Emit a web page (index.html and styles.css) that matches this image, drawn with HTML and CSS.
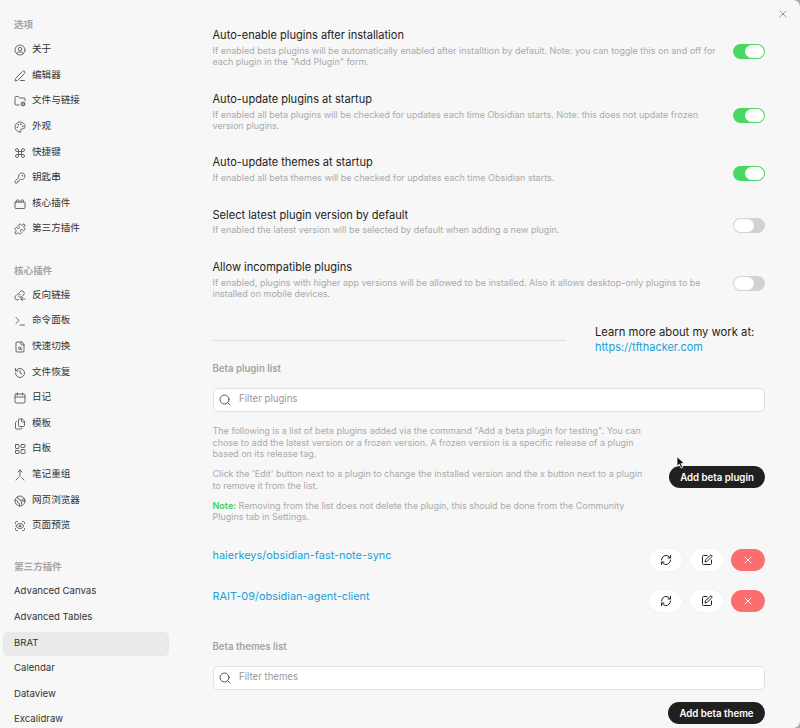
FILE: index.html
```html
<!DOCTYPE html>
<html lang="zh-CN">
<head>
<meta charset="utf-8">
<title>BRAT</title>
<link rel="stylesheet" href="styles.css">
</head>
<body>
<svg class="defs" aria-hidden="true">
  <symbol id="i-search" viewBox="0 0 24 24"><circle cx="11" cy="11" r="9"/><path d="m22 22-4.500-4.500"/></symbol>
  <symbol id="i-x" viewBox="0 0 24 24"><path d="M18 6 6 18M6 6l12 12"/></symbol>
  <symbol id="i-sync" viewBox="0 0 24 24"><path d="M3 12a9 9 0 0 1 9-9 9.750 9.750 0 0 1 6.740 2.740L21 8M21 3v5h-5M21 12a9 9 0 0 1-9 9 9.750 9.750 0 0 1-6.740-2.740L3 16M8 16H3v5"/></symbol>
  <symbol id="i-edit" viewBox="0 0 24 24"><path d="M12 3H5a2 2 0 0 0-2 2v14a2 2 0 0 0 2 2h14a2 2 0 0 0 2-2v-7"/><path d="M18.400 2.600a2.120 2.120 0 0 1 3 3L12 15l-4 1 1-4Z"/></symbol>
</svg>
<div class="modal">
  <nav class="sidebar">
    <section class="group">
      <h2>选项</h2>
      <a class="item"><svg viewBox="0 0 24 24"><circle cx="12" cy="12" r="10"/><circle cx="12" cy="10" r="3.500"/><path d="M6 19.500v-.5a3 3 0 0 1 3-3h6a3 3 0 0 1 3 3v.5"/></svg><span>关于</span></a>
      <a class="item"><svg viewBox="0 0 24 24"><path d="M13 21h8M21.200 6.800a2.800 2.800 0 0 0-4-4L3.800 16.200a2 2 0 0 0-.5.8L2 21.400a.5.5 0 0 0 .6.6l4.400-1.300a2 2 0 0 0 .8-.5z"/></svg><span>编辑器</span></a>
      <a class="item"><svg viewBox="0 0 24 24"><path d="M10.300 20H4a2 2 0 0 1-2-2V5a2 2 0 0 1 2-2h3.900a2 2 0 0 1 1.700.9l.8 1.200a2 2 0 0 0 1.700.9H20a2 2 0 0 1 2 2v3.300"/><circle cx="18" cy="18" r="3"/><path d="M18 14v1M18 21v1M22 18h-1M15 18h-1M21 15l-.9.9M15.900 20.100 15 21M21 21l-.9-.9M15.900 15.900 15 15"/></svg><span>文件与链接</span></a>
      <a class="item"><svg viewBox="0 0 24 24"><path d="M12 22a1 1 0 0 1 0-20 10 9 0 0 1 10 9 5 5 0 0 1-5 5h-2.250a1.750 1.750 0 0 0-1.400 2.800l.3.400a1.750 1.750 0 0 1-1.400 2.800z"/><circle cx="13.500" cy="6.500" r=".6"/><circle cx="17.500" cy="10.500" r=".6"/><circle cx="6.500" cy="12.500" r=".6"/><circle cx="8.500" cy="7.500" r=".6"/></svg><span>外观</span></a>
      <a class="item"><svg viewBox="0 0 24 24"><path d="M15 6v12a3 3 0 1 0 3-3H6a3 3 0 1 0 3 3V6a3 3 0 1 0-3 3h12a3 3 0 1 0-3-3"/></svg><span>快捷键</span></a>
      <a class="item"><svg viewBox="0 0 24 24"><path d="M2.600 17.400A2 2 0 0 0 2 18.800V21a1 1 0 0 0 1 1h3a1 1 0 0 0 1-1v-1a1 1 0 0 1 1-1h1a1 1 0 0 0 1-1v-1a1 1 0 0 1 1-1h.2a2 2 0 0 0 1.400-.6l.8-.8a6.500 6.500 0 1 0-4-4z"/><circle cx="16.500" cy="7.500" r=".6"/></svg><span>钥匙串</span></a>
      <a class="item"><svg viewBox="0 0 24 24"><rect x="2" y="8" width="20" height="13" rx="1"/><path d="M10 8V5c0-.6-.4-1-1-1H6a1 1 0 0 0-1 1v3M19 8V5c0-.6-.4-1-1-1h-3a1 1 0 0 0-1 1v3"/></svg><span>核心插件</span></a>
      <a class="item"><svg viewBox="0 0 24 24"><path d="M15.400 4.400a1 1 0 0 0 1.700-.5 2.500 2.500 0 1 1 3 3 1 1 0 0 0-.5 1.700l1.700 1.700a2.400 2.400 0 0 1 0 3.400l-1.700 1.700a1 1 0 0 1-1.700-.5 2.500 2.500 0 1 0-3 3 1 1 0 0 1 .5 1.700l-1.700 1.700a2.400 2.400 0 0 1-3.400 0l-1.700-1.700a1 1 0 0 0-1.700.5 2.500 2.500 0 1 1-3-3 1 1 0 0 0 .5-1.700l-1.700-1.700a2.400 2.400 0 0 1 0-3.400l1.700-1.700a1 1 0 0 1 1.700.5 2.500 2.500 0 1 0 3-3 1 1 0 0 1-.5-1.700l1.700-1.700a2.400 2.400 0 0 1 3.400 0z"/></svg><span>第三方插件</span></a>
    </section>
    <section class="group">
      <h2>核心插件</h2>
      <a class="item"><svg viewBox="0 0 24 24"><path d="M9 12.500a4.700 4.700 0 0 0 7 .5l3-3a4.800 4.800 0 0 0-6.800-6.800L10.500 5M13 9.500a4.700 4.700 0 0 0-7-.5l-3 3A4.800 4.800 0 0 0 9.500 19M22 18h-8M17 14.500 13.500 18l3.500 3.500"/></svg><span>反向链接</span></a>
      <a class="item"><svg viewBox="0 0 24 24"><path d="m4 17 6-6-6-6M12 20h9"/></svg><span>命令面板</span></a>
      <a class="item"><svg viewBox="0 0 24 24"><path d="M15 2H6a2 2 0 0 0-2 2v16a2 2 0 0 0 2 2h12a2 2 0 0 0 2-2V7zM14 2v4a2 2 0 0 0 2 2h4"/><circle cx="11.500" cy="14.500" r="2.500"/><path d="m13.300 16.300 2.200 2.200"/></svg><span>快速切换</span></a>
      <a class="item"><svg viewBox="0 0 24 24"><path d="M3 12a9 9 0 1 0 9-9 9.750 9.750 0 0 0-6.740 2.740L3 8M3 3v5h5M12 7v5l4 2"/></svg><span>文件恢复</span></a>
      <a class="item"><svg viewBox="0 0 24 24"><path d="M7 2v4M17 2v4M2 10h20"/><rect x="2" y="4" width="20" height="18" rx="2"/></svg><span>日记</span></a>
      <a class="item"><svg viewBox="0 0 24 24"><path d="M16 2h-5a2 2 0 0 0-2 2v11a2 2 0 0 0 2 2h8a2 2 0 0 0 2-2V7zM15 2v4a2 2 0 0 0 2 2h4M5 7a2 2 0 0 0-2 2v11a2 2 0 0 0 2 2h9a2 2 0 0 0 2-2"/></svg><span>模板</span></a>
      <a class="item"><svg viewBox="0 0 24 24"><rect x="3" y="3" width="7" height="8" rx="1"/><rect x="14" y="3" width="8" height="6" rx="1"/><rect x="14" y="13" width="8" height="8" rx="1"/><rect x="3" y="15" width="7" height="6" rx="1"/></svg><span>白板</span></a>
      <a class="item"><svg viewBox="0 0 24 24"><path d="m8 6 4-4 4 4M12 2v10.300a4 4 0 0 1-1.200 2.900L4 22M20 22l-5-5"/></svg><span>笔记重组</span></a>
      <a class="item"><svg viewBox="0 0 24 24"><circle cx="12" cy="12" r="10"/><path d="M21.500 12H17a2 2 0 0 0-2 2v4.500M7 3.300V5a3 3 0 0 0 3 3 2 2 0 0 1 2 2 2 2 0 0 0 4 0c0-1.100.9-2 2-2h3.200M11 22v-4a2 2 0 0 0-2-2 2 2 0 0 1-2-2v-1a2 2 0 0 0-2-2H2"/></svg><span>网页浏览器</span></a>
      <a class="item"><svg viewBox="0 0 24 24"><path d="M3 7V5a2 2 0 0 1 2-2h2M17 3h2a2 2 0 0 1 2 2v2M21 17v2a2 2 0 0 1-2 2h-2M7 21H5a2 2 0 0 1-2-2v-2M4.500 12a8 8 0 0 1 15 0 8 8 0 0 1-15 0z"/><circle cx="12" cy="12" r="1.800"/></svg><span>页面预览</span></a>
    </section>
    <section class="group">
      <h2>第三方插件</h2>
      <a class="item"><span>Advanced Canvas</span></a>
      <a class="item"><span>Advanced Tables</span></a>
      <a class="item active"><span>BRAT</span></a>
      <a class="item"><span>Calendar</span></a>
      <a class="item"><span>Dataview</span></a>
      <a class="item"><span>Excalidraw</span></a>
    </section>
  </nav>
  <main class="content">
    <div class="setting tall">
      <div><h3>Auto-enable plugins after installation</h3>
      <p>If enabled beta plugins will be automatically enabled after installtion by default. Note: you can toggle this on and off for<br>each plugin in the "Add Plugin" form.</p></div>
      <span class="toggle on"></span>
    </div>
    <div class="setting tall second">
      <div><h3>Auto-update plugins at startup</h3>
      <p>If enabled all beta plugins will be checked for updates each time Obsidian starts. Note: this does not update frozen<br>version plugins.</p></div>
      <span class="toggle on"></span>
    </div>
    <div class="setting">
      <div><h3>Auto-update themes at startup</h3>
      <p>If enabled all beta themes will be checked for updates each time Obsidian starts.</p></div>
      <span class="toggle on"></span>
    </div>
    <div class="setting">
      <div><h3>Select latest plugin version by default</h3>
      <p>If enabled the latest version will be selected by default when adding a new plugin.</p></div>
      <span class="toggle"></span>
    </div>
    <div class="setting tall">
      <div><h3>Allow incompatible plugins</h3>
      <p>If enabled, plugins with higher app versions will be allowed to be installed. Also it allows desktop-only plugins to be<br>installed on mobile devices.</p></div>
      <span class="toggle"></span>
    </div>
    <div class="promo">
      <hr>
      <div>Learn more about my work at:<br><a>https://tfthacker.com</a></div>
    </div>
    <h4>Beta plugin list</h4>
    <div class="search"><svg><use href="#i-search"/></svg><span>Filter plugins</span></div>
    <div class="intro">
      <div>
        <p>The following is a list of beta plugins added via the command "Add a beta plugin for testing". You can<br>chose to add the latest version or a frozen version. A frozen version is a specific release of a plugin<br>based on its release tag.</p>
        <p>Click the 'Edit' button next to a plugin to change the installed version and the x button next to a plugin<br>to remove it from the list.</p>
        <p><b>Note:</b> Removing from the list does not delete the plugin, this should be done from the Community<br>Plugins tab in Settings.</p>
      </div>
      <button class="cta">Add beta plugin</button>
    </div>
    <div class="plugin">
      <a>haierkeys/obsidian-fast-note-sync</a>
      <div class="actions"><button><svg><use href="#i-sync"/></svg></button><button><svg><use href="#i-edit"/></svg></button><button class="remove"><svg><use href="#i-x"/></svg></button></div>
    </div>
    <div class="plugin">
      <a>RAIT-09/obsidian-agent-client</a>
      <div class="actions"><button><svg><use href="#i-sync"/></svg></button><button><svg><use href="#i-edit"/></svg></button><button class="remove"><svg><use href="#i-x"/></svg></button></div>
    </div>
    <h4 class="themes">Beta themes list</h4>
    <div class="search"><svg><use href="#i-search"/></svg><span>Filter themes</span></div>
    <div class="footer"><button class="cta">Add beta theme</button></div>
  </main>
  <svg class="close"><use href="#i-x"/></svg>
</div>
<svg class="cursor" viewBox="0 0 9 13"><path d="M1 .8v9.400l2.300-2 1.700 3.900 1.800-.8-1.700-3.700h3z"/></svg>
</body>
</html>
```
FILE: styles.css
```css
* { box-sizing: border-box; }
body {
  margin: 0;
  height: 728px;
  overflow: hidden;
  background: #aaa;
  color: #222;
  font-family: Inter, "Noto Sans CJK SC", sans-serif;
}
h2, h3, h4, p { margin: 0; }
svg { fill: none; stroke: currentColor; stroke-width: 1.75; stroke-linecap: round; stroke-linejoin: round; }
.defs { display: none; }
.modal {
  position: relative;
  display: flex;
  height: 728px;
  overflow: hidden;
  background: #f7f7f7;
  border-radius: 0 7px 7px 0;
}

.sidebar { width: 172px; flex: none; padding: 13.300px 3px 0; }
.group { margin-bottom: 15.200px; }
.group + .group { margin-top: 17.300px; }
.group h2 {
  height: 25px;
  padding-left: 11px;
  color: #a5a5a5;
  font-size: 9.600px;
  line-height: 24px;
  font-weight: 600;
}
.item {
  display: flex;
  align-items: center;
  gap: 6px;
  height: 24px;
  margin-bottom: 1.600px;
  padding-left: 11px;
  border-radius: 5px;
  font-size: 9.600px;
  line-height: 22px;
  white-space: nowrap;
}
.item svg { width: 12px; height: 12px; color: #555; flex: none; }
.item span { height: 24px; }
.active { width: 166px; background: #eaeaea; }

.content { width: 552.500px; margin-left: 40.500px; padding-top: 27px; white-space: nowrap; }
.setting {
  display: flex;
  justify-content: space-between;
  align-items: flex-start;
  height: 52.500px;
}
.setting.tall { height: 64px; }
.setting.second { height: 63px; }
h3 { font-size: 11.050px; line-height: 16px; font-weight: 400; margin-bottom: 1.500px; }
p { color: #aaa; font-size: 8.990px; line-height: 11.500px; }
.toggle {
  width: 32px;
  height: 15px;
  margin-top: 11.500px;
  padding: 1px;
  border-radius: 8px;
  background: #d2d2d2;
  flex: none;
}
.tall .toggle { margin-top: 17px; }
.toggle::after {
  content: "";
  display: block;
  width: 20px;
  height: 13px;
  border-radius: 7px;
  background: #fff;
}
.toggle.on { background: #4bd763; }
.toggle.on::after { margin-left: 11px; width: 19px; }

.promo { display: flex; justify-content: space-between; align-items: center; height: 30px; margin-top: 2px; font-size: 11.250px; line-height: 15px; }
.promo div { width: 170px; }
.promo a { font-size: 11px; }
.promo hr { width: 353px; margin: 0; border: 0; border-top: 1px solid #ddd; }
a { color: #1b9fd8; }
.item { color: #333; }
h4 { height: 14px; margin-top: 7px; color: #a3a3a3; font-size: 9.650px; line-height: 14px; font-weight: 600; }
.search {
  display: flex;
  align-items: center;
  gap: 8px;
  height: 24px;
  margin-top: 12px;
  padding-left: 5.500px;
  border: 1px solid #e0e0e0;
  border-radius: 5px;
  background: #fff;
  color: #999;
  font-size: 9.650px;
  line-height: 20px;
}
.search svg { width: 12px; height: 12px; color: #555; stroke-width: 2; }
.search span { height: 22px; }
.intro { display: flex; justify-content: space-between; margin-top: 13px; height: 121.500px; }
.intro p { margin-bottom: 8.700px; }
b { color: #43d15b; font-weight: 600; }
button { border: 0; font: inherit; padding: 0; }
.cta {
  height: 22px;
  width: 96px;
  margin-top: 41px;
  border-radius: 11px;
  background: #202020;
  color: #fff;
  font-size: 9.700px;
  line-height: 21px;
  font-weight: 600;
}
.plugin { display: flex; justify-content: space-between; height: 41px; font-size: 10.950px; line-height: 16px; }
.actions { display: flex; gap: 8px; margin-top: 2px; }
.actions button {
  display: flex;
  align-items: center;
  justify-content: center;
  width: 33px;
  height: 22px;
  border-radius: 11px;
  background: #fff;
  box-shadow: 0 0 1px #ddd;
}
.actions svg { width: 12px; height: 12px; color: #222; stroke-width: 2; }
.actions .remove { width: 34px; background: #fb6e6e; box-shadow: none; }
.actions .remove svg { color: #fff; }
.themes { margin-top: 11.500px; }
.footer { display: flex; justify-content: flex-end; }
.footer .cta { width: 97px; margin-top: 12px; }
.close { position: absolute; right: 11px; top: 8px; width: 12px; height: 12px; color: #888; }
.cursor { position: absolute; left: 676px; top: 456px; width: 9px; height: 13px; fill: #111; stroke: #fff; stroke-width: .8; }
```
